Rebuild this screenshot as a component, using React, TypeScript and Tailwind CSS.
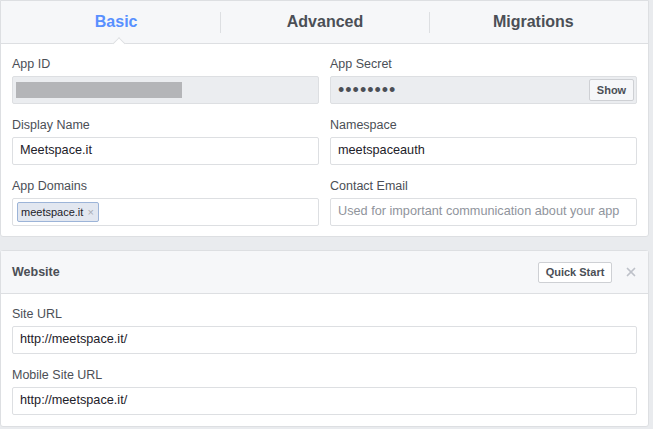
import { X } from "lucide-react";

type Field = {
  label: string;
  value?: string;
  placeholder?: string;
};

function Label({ children }: { children: string }) {
  return (
    <div className="mb-1 h-4 text-[12.5px] leading-4 text-[#4b4f56]">
      {children}
    </div>
  );
}

function TextInput({ value, placeholder }: { value?: string; placeholder?: string }) {
  return (
    <div className="flex h-7 items-center rounded-[2px] border border-[#dddfe2] bg-white px-[7px] text-[12.7px]">
      {value ? (
        <span className="text-[#1d2129]">{value}</span>
      ) : (
        <span className="text-[#90949c]">{placeholder}</span>
      )}
    </div>
  );
}

function App() {
  const tabs = ["Basic", "Advanced", "Migrations"];

  const websiteFields: Field[] = [
    { label: "Site URL", value: "http://meetspace.it/" },
    { label: "Mobile Site URL", value: "http://meetspace.it/" },
  ];

  return (
    <div className="min-h-screen bg-[#e9ebee] font-['Liberation_Sans',Arial,sans-serif]">
      <div className="w-[649px]">
        {/* basic settings card */}
        <div className="rounded-b-[3px] border border-[#dddfe2] bg-white">
          <div className="flex h-[43px] border-b border-[#dddfe2] bg-[#f6f7f9] px-[11px]">
            {tabs.map((tab, i) => (
              <div key={tab} className="relative flex flex-1 items-center">
                {i > 0 && <div className="h-[21px] w-px bg-[#dddfe2]" />}
                <div
                  className={`flex-1 text-center text-[16px] font-bold ${
                    i === 0 ? "text-[#5890ff]" : "text-[#4b4f56]"
                  }`}
                >
                  {tab}
                </div>
                {i === 0 && (
                  <div className="absolute -bottom-[5px] left-[calc(50%+3px)] h-[9px] w-[9px] -translate-x-1/2 rotate-45 border-l border-t border-[#dddfe2] bg-white" />
                )}
              </div>
            ))}
          </div>

          <div className="grid grid-cols-2 gap-x-[11px] gap-y-[13px] px-[11px] pt-3 pb-[10px]">
            <div>
              <Label>App ID</Label>
              <div className="flex h-7 items-center rounded-[2px] border border-[#dddfe2] bg-[#ebedf0] px-[3px]">
                <div className="h-4 w-[166px] bg-[#b4b5b8]" />
              </div>
            </div>
            <div>
              <Label>App Secret</Label>
              <div className="flex h-7 items-center justify-between rounded-[2px] border border-[#dddfe2] bg-[#ebedf0] pl-[7px] pr-[2px]">
                <span className="text-[18px] leading-none tracking-[1px] text-[#4b4f56]">
                  ••••••••
                </span>
                <button className="flex h-[22px] w-[45px] items-center justify-center rounded-[2px] border border-[#ced0d4] bg-[#f6f7f9] text-[11px] font-bold text-[#4b4f56]">
                  Show
                </button>
              </div>
            </div>
            <div>
              <Label>Display Name</Label>
              <TextInput value="Meetspace.it" />
            </div>
            <div>
              <Label>Namespace</Label>
              <TextInput value="meetspaceauth" />
            </div>
            <div>
              <Label>App Domains</Label>
              <div className="flex h-7 items-center rounded-[2px] border border-[#dddfe2] bg-white px-1">
                <span className="flex h-5 items-center gap-[4px] rounded-[2px] border border-[#9cb4d8] bg-[#e2e7f0] pl-[3px] pr-[4px] text-[11px] text-[#1d2129]">
                  meetspace.it
                  <span className="text-[11px] text-[#a8acb3]">×</span>
                </span>
              </div>
            </div>
            <div>
              <Label>Contact Email</Label>
              <TextInput placeholder="Used for important communication about your app" />
            </div>
          </div>
        </div>

        {/* website card */}
        <div className="mt-[13px] rounded-[3px] border border-[#dddfe2] bg-white">
          <div className="flex h-[43px] items-center justify-between border-b border-[#dddfe2] bg-[#f6f7f9] pl-[11px] pr-[10px]">
            <div className="text-[12.5px] font-bold text-[#4b4f56]">Website</div>
            <div className="flex items-center gap-[12px]">
              <button className="flex h-[21px] w-[74px] items-center justify-center rounded-[2px] border border-[#ced0d4] bg-white text-[11px] font-bold text-[#4b4f56]">
                Quick Start
              </button>
              <X size={14} strokeWidth={3} className="text-[#bec2c9]" />
            </div>
          </div>
          <div className="flex flex-col gap-[13px] px-[11px] pt-3 pb-[11px]">
            {websiteFields.map((field) => (
              <div key={field.label}>
                <Label>{field.label}</Label>
                <TextInput value={field.value} />
              </div>
            ))}
          </div>
        </div>
      </div>
    </div>
  );
}

export default App;
